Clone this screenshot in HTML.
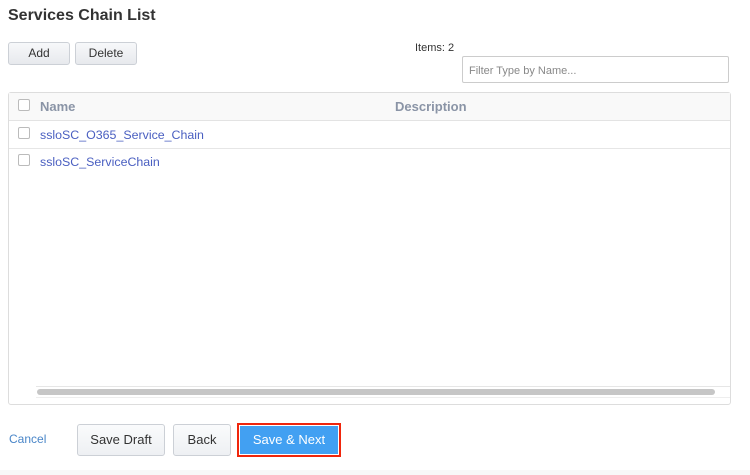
<!DOCTYPE html><html><head><style>
body{margin:0;width:750px;height:475px;background:#fff;font-family:"Liberation Sans",Arial,sans-serif;position:relative;overflow:hidden}
.a{position:absolute}
.btn{position:absolute;box-sizing:border-box;border:1px solid #ccd0d6;border-radius:3px;background:linear-gradient(#f7f8fa,#e7e9ed);font-size:12px;color:#333;text-align:center}
.cb{position:absolute;width:10px;height:10px;border:1px solid #bbb;border-radius:2px;background:#fff}
.lnk{position:absolute;color:#4a5fc1;font-size:12.4px}
</style></head><body>
<div class="a" style="left:8px;top:7px;font-size:16px;font-weight:bold;color:#333">Services Chain List</div>
<div class="btn" style="left:8px;top:42px;width:62px;height:23px;line-height:21px">Add</div>
<div class="btn" style="left:75px;top:42px;width:62px;height:23px;line-height:21px">Delete</div>
<div class="a" style="left:415px;top:42px;font-size:11px;color:#333">Items: 2</div>
<div class="a" style="left:462px;top:56px;width:267px;height:27px;box-sizing:border-box;border:1px solid #ccc;border-radius:2px;font-size:11px;color:#888;padding:8px 6px">Filter Type by Name...</div>
<div class="a" style="left:8px;top:92px;width:723px;height:313px;box-sizing:border-box;border:1px solid #ddd;border-radius:3px">
 <div class="a" style="left:0;top:0;width:721px;height:27px;background:#f9f9f9;border-bottom:1px solid #e3e3e3"></div>
 <div class="cb" style="left:9px;top:6px"></div>
 <div class="a" style="left:31px;top:6px;font-size:13px;font-weight:bold;color:#8a94a6">Name</div>
 <div class="a" style="left:386px;top:6px;font-size:13px;font-weight:bold;color:#8a94a6">Description</div>
 <div class="cb" style="left:9px;top:34px"></div>
 <div class="lnk" style="left:31px;top:35px">ssloSC_O365_Service_Chain</div>
 <div class="a" style="left:0;top:55px;width:721px;border-top:1px solid #e6e6e6"></div>
 <div class="cb" style="left:9px;top:61px"></div>
 <div class="lnk" style="left:31px;top:62px">ssloSC_ServiceChain</div>
 <div class="a" style="left:27px;top:293px;width:694px;border-top:1px solid #e6e6e6"></div>
 <div class="a" style="left:28px;top:296px;width:678px;height:6px;background:#c6c6c6;border-radius:3px"></div>
 <div class="a" style="left:27px;top:304px;width:694px;border-top:1px solid #eee"></div>
</div>
<div class="a" style="left:9px;top:432px;font-size:12px;color:#4a86c8">Cancel</div>
<div class="btn" style="left:77px;top:424px;width:88px;height:32px;line-height:30px;font-size:13px;background:linear-gradient(#fafbfc,#eef0f3)">Save Draft</div>
<div class="btn" style="left:173px;top:424px;width:58px;height:32px;line-height:30px;font-size:13px;background:linear-gradient(#fafbfc,#eef0f3)">Back</div>
<div class="a" style="left:237px;top:423px;width:104px;height:34px;box-sizing:border-box;border:2px solid #f0260c;background:#fff;padding:1px">
 <div style="width:100%;height:100%;background:#42a0f2;color:#fff;font-size:13px;text-align:center;line-height:28px">Save &amp; Next</div>
</div>
<div class="a" style="left:0;top:470px;width:750px;height:5px;background:#f8f8f8"></div>
</body></html>
